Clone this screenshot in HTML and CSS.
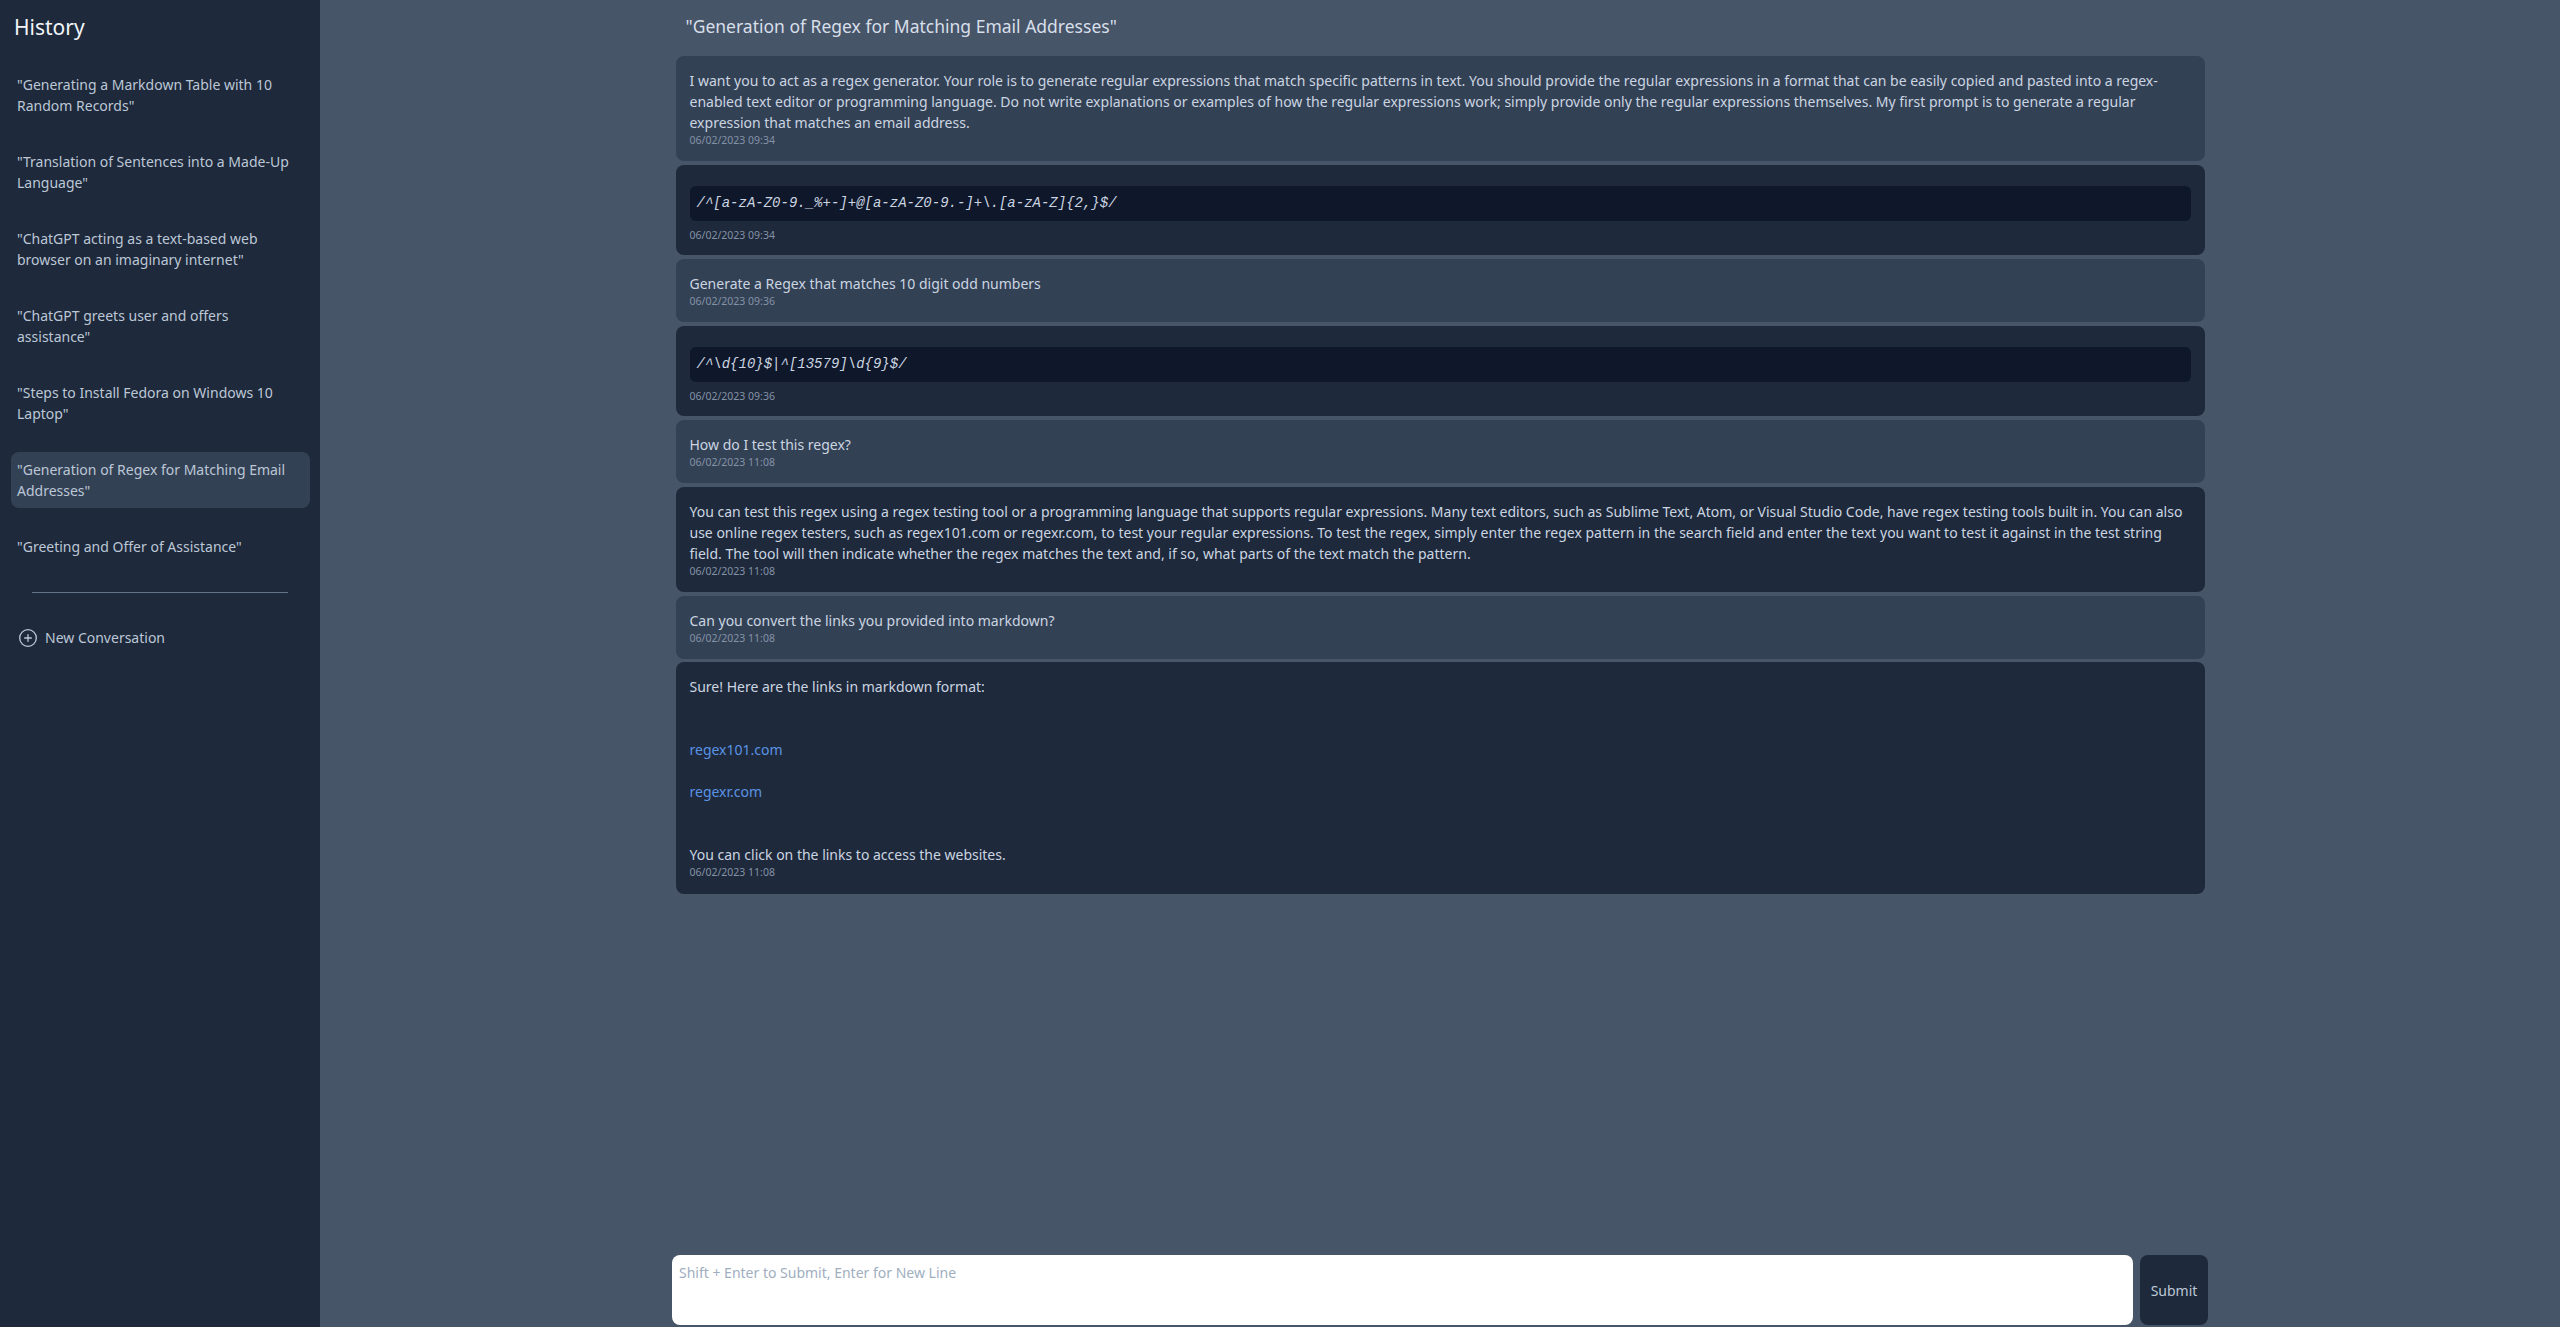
FILE: index.html
```html
<!DOCTYPE html>
<html lang="en">
<head>
    <meta charset="UTF-8">
    <title>Chat History</title>
    <link rel="stylesheet" href="styles.css">
</head>
<body>
    <div class="layout">
        <aside class="sidebar">
            <h2>History</h2>
            <ul class="history-list">
                <li class="history-item">"Generating a Markdown Table with 10 Random Records"</li>
                <li class="history-item">"Translation of Sentences into a Made-Up Language"</li>
                <li class="history-item">"ChatGPT acting as a text-based web browser on an imaginary internet"</li>
                <li class="history-item">"ChatGPT greets user and offers assistance"</li>
                <li class="history-item">"Steps to Install Fedora on Windows 10 Laptop"</li>
                <li class="history-item active">"Generation of Regex for Matching Email Addresses"</li>
                <li class="history-item">"Greeting and Offer of Assistance"</li>
            </ul>
            <hr class="divider">
            <button class="new-chat">
                <svg class="new-chat-icon" viewBox="0 0 24 24" fill="none" stroke="currentColor" stroke-width="1.6" stroke-linecap="round">
                    <circle cx="12" cy="12" r="10"></circle>
                    <path d="M12 8v8M8 12h8"></path>
                </svg>
                New Conversation
            </button>
        </aside>

        <main class="main-content">
            <div class="thread">
                <h1>"Generation of Regex for Matching Email Addresses"</h1>

                <div class="message user">
                    <p>I want you to act as a regex generator. Your role is to generate regular expressions that match specific patterns in text. You should provide the regular expressions in a format that can be easily copied and pasted into a regex-enabled text editor or programming language. Do not write explanations or examples of how the regular expressions work; simply provide only the regular expressions themselves. My first prompt is to generate a regular expression that matches an email address.</p>
                    <div class="time">06/02/2023 09:34</div>
                </div>

                <div class="message bot">
                    <pre class="code">/^[a-zA-Z0-9._%+-]+@[a-zA-Z0-9.-]+\.[a-zA-Z]{2,}$/</pre>
                    <div class="time">06/02/2023 09:34</div>
                </div>

                <div class="message user">
                    <p>Generate a Regex that matches 10 digit odd numbers</p>
                    <div class="time">06/02/2023 09:36</div>
                </div>

                <div class="message bot">
                    <pre class="code">/^\d{10}$|^[13579]\d{9}$/</pre>
                    <div class="time">06/02/2023 09:36</div>
                </div>

                <div class="message user">
                    <p>How do I test this regex?</p>
                    <div class="time">06/02/2023 11:08</div>
                </div>

                <div class="message bot">
                    <p>You can test this regex using a regex testing tool or a programming language that supports regular expressions. Many text editors, such as Sublime Text, Atom, or Visual Studio Code, have regex testing tools built in. You can also use online regex testers, such as regex101.com or regexr.com, to test your regular expressions. To test the regex, simply enter the regex pattern in the search field and enter the text you want to test it against in the test string field. The tool will then indicate whether the regex matches the text and, if so, what parts of the text match the pattern.</p>
                    <div class="time">06/02/2023 11:08</div>
                </div>

                <div class="message user">
                    <p>Can you convert the links you provided into markdown?</p>
                    <div class="time">06/02/2023 11:08</div>
                </div>

                <div class="message bot">
                    <p>Sure! Here are the links in markdown format:</p>
                    <ul class="link-list">
                        <li><a href="#">regex101.com</a></li>
                        <li><a href="#">regexr.com</a></li>
                    </ul>
                    <p>You can click on the links to access the websites.</p>
                    <div class="time">06/02/2023 11:08</div>
                </div>
            </div>

            <form class="composer">
                <textarea placeholder="Shift + Enter to Submit, Enter for New Line"></textarea>
                <button type="button" class="submit">Submit</button>
            </form>
        </main>
    </div>
</body>
</html>
```

FILE: styles.css
```css
:root {
    --slate-900: #0f172a;
    --slate-800: #1e293b;
    --slate-700: #334155;
    --slate-600: #475569;
    --slate-300: #cbd5e1;
    --muted-text: #bcc7d6;
}

* {
    margin: 0;
    padding: 0;
    box-sizing: border-box;
}

body {
    font-family: "Noto Sans", sans-serif;
    font-size: 14px;
    line-height: 21px;
    background-color: var(--slate-600);
    color: var(--slate-300);
}

.layout {
    display: grid;
    grid-template-columns: 320px 1fr;
    height: 100vh;
    overflow: hidden;
}

/* sidebar */
.sidebar {
    background-color: var(--slate-800);
    padding: 0 10px 0 11px;
}

.sidebar h2 {
    font-size: 21px;
    font-weight: 400;
    line-height: 31.5px;
    color: #f1f5f9;
    padding: 12px 3px 0;
    margin-bottom: 23.5px;
}

.history-list {
    list-style: none;
    padding-bottom: 7px;
}

.history-item {
    padding: 7px 6px;
    margin-bottom: 21px;
    border-radius: 8px;
    color: var(--muted-text);
}

.history-item.active {
    background-color: var(--slate-700);
}

.divider {
    border: none;
    border-top: 1px solid #64748b;
    margin: 0 22px 0 21px;
}

.new-chat {
    display: flex;
    align-items: center;
    gap: 7px;
    margin: 34px 7px 0;
    background: none;
    border: none;
    color: var(--muted-text);
    font: inherit;
}

.new-chat-icon {
    width: 20px;
    height: 20px;
}

/* main */
.main-content {
    display: flex;
    flex-direction: column;
    min-width: 0;
}

.thread {
    flex: 1;
    width: 1529px;
    margin: 0 auto;
}

h1 {
    font-size: 17.5px;
    font-weight: 400;
    line-height: 26px;
    color: #d8dfe9;
    padding: 13px 10px 0;
    margin-bottom: 17px;
}

.message {
    padding: 14px 14px 12.5px;
    margin-bottom: 3.6px;
    border-radius: 8px;
}

.message.user {
    background-color: var(--slate-700);
}

.message.bot {
    background-color: var(--slate-800);
}

.time {
    font-size: 10.5px;
    line-height: 15.75px;
    color: #8492a6;
}

.code {
    font-family: "Liberation Mono", monospace;
    font-style: italic;
    font-size: 14px;
    line-height: 21px;
    background-color: var(--slate-900);
    color: var(--slate-300);
    padding: 7px;
    margin: 7px 0;
    border-radius: 6px;
}

.code + .time {
    margin-bottom: -0.75px;
}

.link-list {
    list-style: none;
    margin: 21px 0;
}

.link-list li {
    padding-top: 21px;
}

.link-list li:last-child {
    padding-bottom: 21px;
}

.link-list a {
    color: #5b93e4;
    text-decoration: none;
}

/* input */
.composer {
    display: flex;
    gap: 7px;
    width: 1536px;
    margin: 0 auto 2px;
}

.composer textarea {
    flex: 1;
    height: 70px;
    border: none;
    border-radius: 8px;
    padding: 7px;
    font: inherit;
    resize: none;
    background: #fff;
}

.composer textarea::placeholder {
    color: #a0aec0;
}

.submit {
    width: 68px;
    background-color: var(--slate-800);
    color: var(--muted-text);
    border: none;
    border-radius: 8px;
    font: inherit;
}
```
